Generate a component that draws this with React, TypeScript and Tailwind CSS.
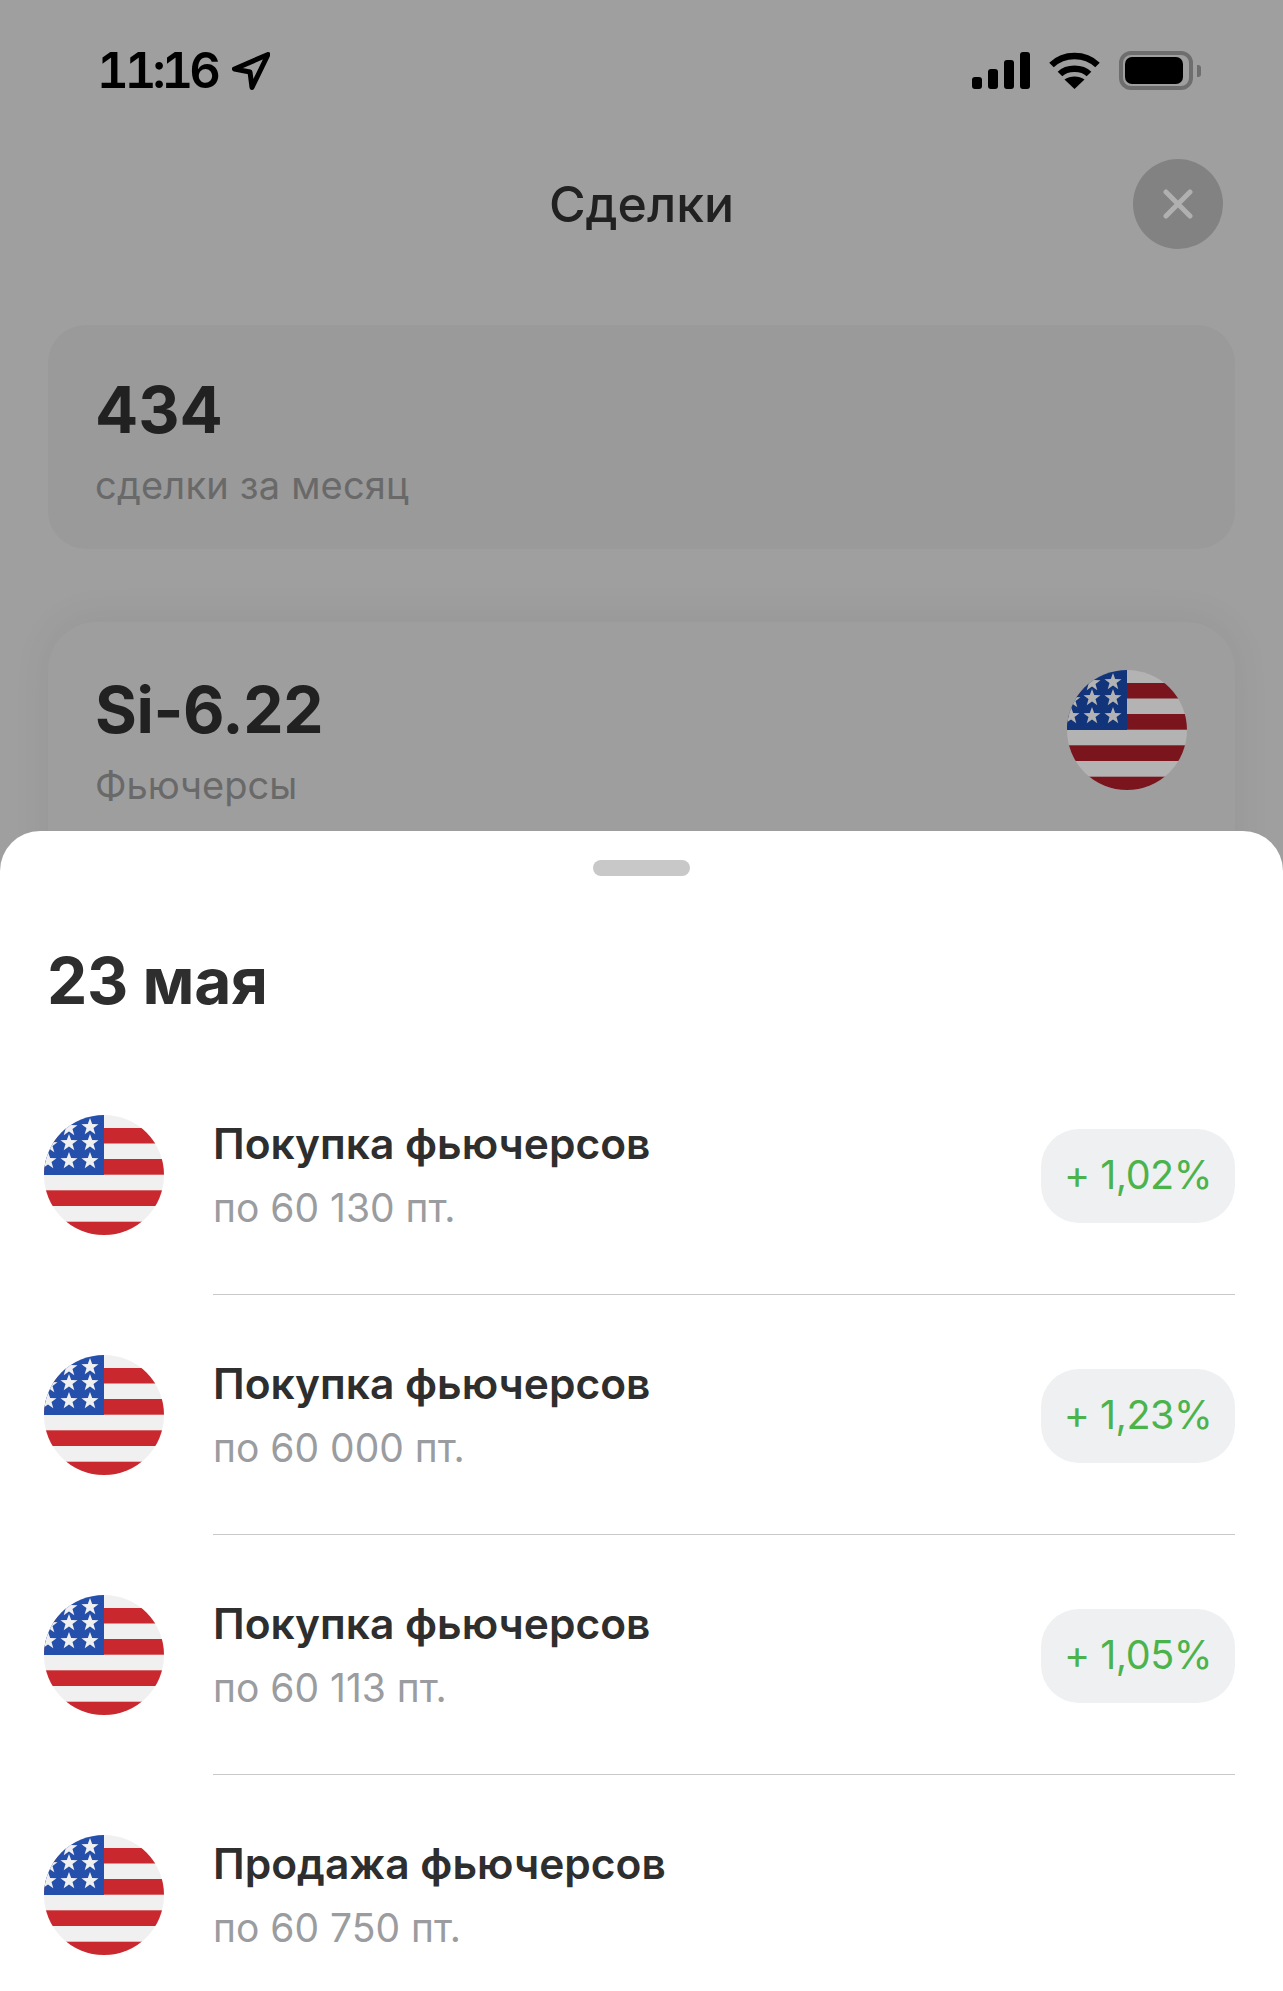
const font = "font-['Inter','Noto_Sans',sans-serif]";

const deals = [
  { title: "Покупка фьючерсов", price: "по 60 130 пт.", change: "+ 1,02%" },
  { title: "Покупка фьючерсов", price: "по 60 000 пт.", change: "+ 1,23%" },
  { title: "Покупка фьючерсов", price: "по 60 113 пт.", change: "+ 1,05%" },
  { title: "Продажа фьючерсов", price: "по 60 750 пт.", change: "" },
];

const stars = [
  [46, 12],
  [25, 13],
  [25, 28],
  [46, 28],
  [25, 46],
  [46, 46],
  [4, 46],
  [5, 30],
];

const starPath = "M0 -9 L2.2 -2.9 L8.5 -2.8 L3.5 1.1 L5.3 7.2 L0 3.6 L-5.3 7.2 L-3.5 1.1 L-8.5 -2.8 L-2.2 -2.9 Z";

function Flag({ dimmed = false }: { dimmed?: boolean }) {
  const white = dimmed ? "#b3b3b3" : "#f0f0f0";
  const red = dimmed ? "#7b151d" : "#c9282f";
  const blue = dimmed ? "#12347a" : "#2450ac";
  return (
    <svg viewBox="0 0 120 120" className="w-[120px] h-[120px] shrink-0">
      <defs>
        <clipPath id="flag-circle">
          <circle cx="60" cy="60" r="60" />
        </clipPath>
      </defs>
      <g clipPath="url(#flag-circle)">
        <rect width="120" height="120" fill={white} />
        <rect y="13" width="120" height="15.5" fill={red} />
        <rect y="44" width="120" height="15.7" fill={red} />
        <rect y="75.3" width="120" height="15.7" fill={red} />
        <rect y="106.7" width="120" height="13.3" fill={red} />
        <rect width="60" height="60" fill={blue} />
        {stars.map(([x, y]) => (
          <path key={`${x}-${y}`} d={starPath} transform={`translate(${x} ${y})`} fill={white} />
        ))}
      </g>
    </svg>
  );
}

function StatusBar() {
  return (
    <div className="flex items-center justify-between pt-[51px] pl-[97px] pr-[82px] h-[90px]">
      <div className="flex items-center gap-[15px]">
        <span className="text-[49px] leading-[39px] font-semibold tabular-nums tracking-[-4px] text-black">11:16</span>
        <svg viewBox="0 0 38 38" className="w-[38px] h-[38px]" fill="none" stroke="#000" strokeWidth="5" strokeLinejoin="round">
          <path d="M36 2.5 L2.5 17 L18 20 L20 35.5 Z" />
        </svg>
      </div>
      <div className="flex items-center gap-[19px]">
        <svg viewBox="0 0 58 37" className="w-[58px] h-[37px]" fill="#000">
          <rect x="0" y="25" width="10" height="12" rx="3" />
          <rect x="16" y="17" width="10" height="20" rx="3" />
          <rect x="32" y="8" width="10" height="29" rx="3" />
          <rect x="48" y="0" width="10" height="37" rx="3" />
        </svg>
        <svg viewBox="0 0 51 37" className="w-[51px] h-[37px]" fill="none" stroke="#000" strokeWidth="6.5">
          <path d="M2.5 13 C15 1 36 1 48.5 13" />
          <path d="M11 22 C18 15 33 15 40 22" />
          <path d="M25.5 37 L15.5 27.5 C21 23.5 30 23.5 35.5 27.5 Z" fill="#000" stroke="none" />
        </svg>
        <div className="flex items-center gap-[4px]">
          <div className="w-[74px] h-[39px] rounded-[12px] border-[4px] border-[#6e6e6e] p-[2px] pr-[6px]">
            <div className="w-full h-full rounded-[7px] bg-black" />
          </div>
          <div className="w-[4px] h-[12px] rounded-r-[3px] bg-[#6e6e6e]" />
        </div>
      </div>
    </div>
  );
}

function Header() {
  return (
    <div className="relative flex items-center justify-center mt-[69px] h-[90px]">
      <h1 className="text-[50px] font-medium text-[#212121]">Сделки</h1>
      <button className="absolute right-[60px] top-0 flex items-center justify-center w-[90px] h-[90px] rounded-full bg-[#828282]">
        <svg viewBox="0 0 30 30" className="w-[30px] h-[30px]" fill="none" stroke="#b0b0b0" strokeWidth="5" strokeLinecap="round">
          <path d="M3 3 L27 27 M27 3 L3 27" />
        </svg>
      </button>
    </div>
  );
}

function DealRow({ deal, last }: { deal: (typeof deals)[number]; last: boolean }) {
  return (
    <div className="flex h-[240px] pl-[44px] pr-[48px]">
      <div className="pt-[60px]">
        <Flag />
      </div>
      <div className={`flex flex-1 items-start ml-[49px] ${last ? "" : "border-b border-[#c9c9cb]"}`}>
        <div className="flex-1 pt-[64px]">
          <div className="text-[42.5px] leading-[50px] font-semibold text-[#2e2e2e]">{deal.title}</div>
          <div className="mt-[14px] text-[39px] leading-[50px] text-[#9a9ca0]">{deal.price}</div>
        </div>
        {deal.change && (
          <div className="flex items-center justify-center mt-[74px] w-[194px] h-[94px] rounded-[38px] bg-[#eef0f1] text-[39.5px] leading-[50px] pb-[2px] text-[#4cb34c] tracking-[-0.5px]">
            {deal.change}
          </div>
        )}
      </div>
    </div>
  );
}

export default function App() {
  return (
    <div className={`w-[1283px] h-[1991px] overflow-hidden bg-white ${font}`}>
      <div className="h-[880px] overflow-hidden bg-[#9f9f9f]">
        <StatusBar />
        <Header />
        <div className="mt-[76px] mx-[48px] h-[224px] rounded-[38px] bg-[#9a9a9a] pl-[47px] pt-[45px]">
          <div className="text-[64px] leading-[80px] font-bold text-[#212121]">434</div>
          <div className="mt-[10px] text-[38px] leading-[50px] text-[#696969] tracking-[0.2px]">сделки за месяц</div>
        </div>
        <div className="mt-[73px] mx-[48px] h-[300px] rounded-t-[48px] bg-[#9e9e9e] shadow-[0_-4px_40px_rgba(0,0,0,0.06)] flex justify-between pl-[47px] pr-[48px] pt-[48px]">
          <div>
            <div className="text-[64px] leading-[80px] font-bold tracking-[-0.4px] text-[#212121]">Si-6.22</div>
            <div className="mt-[10px] text-[38px] leading-[50px] text-[#696969]">Фьючерсы</div>
          </div>
          <Flag dimmed />
        </div>
      </div>
      <div className="relative -mt-[49px] rounded-t-[40px] bg-white">
        <div className="flex justify-center pt-[29px]">
          <div className="w-[97px] h-[16px] rounded-[8px] bg-[#c8c8c8]" />
        </div>
        <h2 className="mt-[65px] ml-[47px] text-[64px] leading-[80px] font-bold tracking-[-0.4px] text-[#2e2e2e]">23 мая</h2>
        <div className="mt-[34px]">
          {deals.map((deal, i) => (
            <DealRow key={deal.price} deal={deal} last={i === deals.length - 1} />
          ))}
        </div>
      </div>
    </div>
  );
}
